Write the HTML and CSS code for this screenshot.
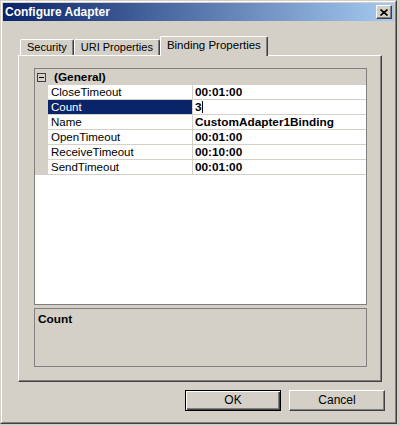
FILE: index.html
```html
<!DOCTYPE html>
<html lang="en">
<head>
  <meta charset="UTF-8">
  <title>Configure Adapter</title>
  <link rel="stylesheet" href="styles.css">
</head>
<body>
  <div class="window">
    <div class="frame">
      <div class="titlebar">
        <span class="title">Configure Adapter</span>
        <div class="close">
          <svg width="8" height="7" viewBox="0 0 8 7">
            <path d="M0.5 0.5 L7.5 6.5 M7.5 0.5 L0.5 6.5" stroke="#000" stroke-width="1.6" fill="none"/>
          </svg>
        </div>
      </div>

      <div class="client">
        <div class="tabs">
          <div class="tab">Security</div>
          <div class="tab">URI Properties</div>
          <div class="tab active">Binding Properties</div>
        </div>

        <div class="panel">
          <div class="grid">
            <div class="category"><span class="expander"></span>(General)</div>
            <div class="row"><div class="gutter"></div><div class="name">CloseTimeout</div><div class="value">00:01:00</div></div>
            <div class="row"><div class="gutter"></div><div class="name selected">Count</div><div class="value">3<span class="caret"></span></div></div>
            <div class="row"><div class="gutter"></div><div class="name">Name</div><div class="value">CustomAdapter1Binding</div></div>
            <div class="row"><div class="gutter"></div><div class="name">OpenTimeout</div><div class="value">00:01:00</div></div>
            <div class="row"><div class="gutter"></div><div class="name">ReceiveTimeout</div><div class="value">00:10:00</div></div>
            <div class="row"><div class="gutter"></div><div class="name">SendTimeout</div><div class="value">00:01:00</div></div>
          </div>
          <!-- description pane -->
          <div class="help">Count</div>
        </div>

        <div class="buttons">
          <div class="btn default">OK</div>
          <div class="btn">Cancel</div>
        </div>
      </div>
    </div>
  </div>
</body>
</html>
```

FILE: styles.css
```css
body {
  margin: 0;
  width: 400px;
  height: 426px;
  background: #d4d0c8;
  font-family: "Liberation Sans", Arial, sans-serif;
  font-size: 12px;
  color: #000;
  overflow: hidden;
}

.window {
  width: 397px;
  height: 424px;
  box-sizing: border-box;
  border: 1px solid;
  border-color: #d4d0c8 #404040 #404040 #d4d0c8;
}

.frame {
  height: 100%;
  box-sizing: border-box;
  border: 1px solid;
  border-color: #fff #808080 #808080 #fff;
  padding: 1px;
}

.titlebar {
  height: 18px;
  display: flex;
  align-items: center;
  justify-content: space-between;
  padding-left: 2px;
  background: linear-gradient(to right, #0a246a, #a6caf0);
}

.title {
  color: #fff;
  font-weight: bold;
  font-size: 12px;
}

.close {
  width: 16px;
  height: 14px;
  box-sizing: border-box;
  margin-right: 2px;
  background: #d4d0c8;
  border: 1px solid;
  border-color: #fff #404040 #404040 #fff;
  box-shadow: inset -1px -1px #808080;
  display: flex;
  align-items: center;
  justify-content: center;
}

.client {
  padding-left: 15px;
}

/* tabs */
.tabs {
  display: flex;
  align-items: flex-end;
  margin-top: 15px;
  margin-bottom: -1px;
  padding-left: 2px;
  height: 20px;
}

.tab {
  height: 16px;
  margin-bottom: 1px;
  box-sizing: border-box;
  padding: 0 6px;
  font-size: 11px;
  line-height: 15px;
  border: 1px solid;
  border-bottom: none;
  border-color: #fff #404040 #fff #fff;
  box-shadow: inset -1px 0 #808080;
  border-radius: 2px 2px 0 0;
  background: #d4d0c8;
}

.tab.active {
  position: relative;
  z-index: 1;
  height: 20px;
  margin-bottom: 0;
  padding: 0 6px;
  font-size: 11.5px;
  line-height: 17px;
}

.panel {
  width: 364px;
  height: 327px;
  box-sizing: border-box;
  border: 1px solid;
  border-color: #fff #404040 #404040 #fff;
  box-shadow: inset -1px -1px #808080;
  padding: 12px 14px 14px 15px;
}

/* property grid */
.grid {
  height: 237px;
  box-sizing: border-box;
  border: 1px solid #808080;
  background: #fff;
}

.category {
  height: 16px;
  display: flex;
  align-items: center;
  background: #d4d0c8;
  font-weight: bold;
  font-size: 11.8px;
}

.expander {
  position: relative;
  width: 9px;
  height: 9px;
  box-sizing: border-box;
  border: 1px solid #404040;
  margin: 0 8px 0 2px;
  background: #d4d0c8;
}

.expander::after {
  content: "";
  position: absolute;
  left: 1px;
  top: 3px;
  width: 5px;
  height: 1px;
  background: #000;
}

.row {
  display: flex;
  height: 15px;
  line-height: 14px;
  font-size: 11.5px;
}

.gutter {
  width: 13px;
  background: #d4d0c8;
}

.name {
  width: 141px;
  padding-left: 3px;
  border-right: 1px solid #d4d0c8;
  border-bottom: 1px solid #d4d0c8;
}

.name.selected {
  background: #0a246a;
  color: #fff;
}

.value {
  flex: 1;
  padding-left: 2px;
  font-weight: bold;
  font-size: 11.8px;
  border-bottom: 1px solid #d4d0c8;
}

.caret {
  display: inline-block;
  width: 1px;
  height: 12px;
  background: #000;
  vertical-align: -2px;
}

.help {
  margin-top: 3px;
  height: 59px;
  box-sizing: border-box;
  border: 1px solid #808080;
  padding: 3px 3px;
  font-weight: bold;
  font-size: 11.8px;
}

/* dialog buttons */
.buttons {
  display: flex;
  justify-content: flex-end;
  gap: 8px;
  margin-top: 8px;
  margin-right: 9px;
}

.btn {
  width: 96px;
  height: 21px;
  box-sizing: border-box;
  border: 1px solid;
  border-color: #fff #404040 #404040 #fff;
  box-shadow: inset -1px -1px #808080;
  text-align: center;
  line-height: 18px;
}

.btn.default {
  border-color: #000;
  box-shadow: inset 1px 1px #fff, inset -1px -1px #404040, inset -2px -2px #808080;
}
```
